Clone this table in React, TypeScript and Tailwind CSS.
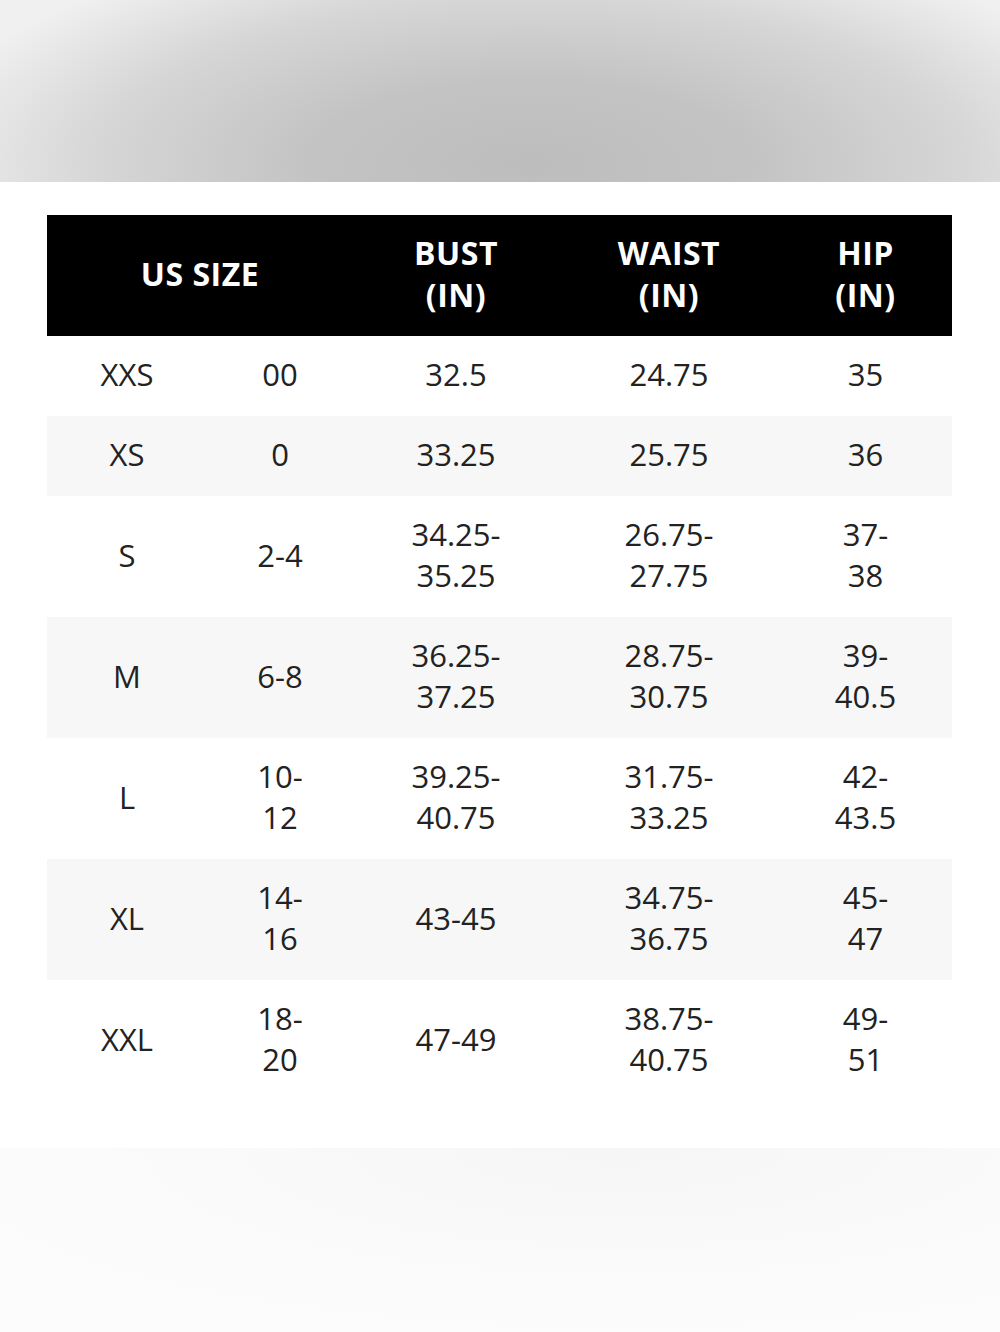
import React from "react";

const rows: { a: string; b: string[]; c: string[]; d: string[]; e: string[] }[] = [
  { a: "XXS", b: ["00"], c: ["32.5"], d: ["24.75"], e: ["35"] },
  { a: "XS", b: ["0"], c: ["33.25"], d: ["25.75"], e: ["36"] },
  { a: "S", b: ["2-4"], c: ["34.25-", "35.25"], d: ["26.75-", "27.75"], e: ["37-", "38"] },
  { a: "M", b: ["6-8"], c: ["36.25-", "37.25"], d: ["28.75-", "30.75"], e: ["39-", "40.5"] },
  { a: "L", b: ["10-", "12"], c: ["39.25-", "40.75"], d: ["31.75-", "33.25"], e: ["42-", "43.5"] },
  { a: "XL", b: ["14-", "16"], c: ["43-45"], d: ["34.75-", "36.75"], e: ["45-", "47"] },
  { a: "XXL", b: ["18-", "20"], c: ["47-49"], d: ["38.75-", "40.75"], e: ["49-", "51"] },
];

function Cell({ lines }: { lines: string[] }) {
  return (
    <div className="flex flex-col items-center justify-center text-center">
      {lines.map((l, i) => (
        <span key={i}>{l}</span>
      ))}
    </div>
  );
}

export default function App() {
  return (
    <div
      className="w-full h-[1332px] flex flex-col bg-white"
      style={{ fontFamily: '"Open Sans", "Noto Sans", sans-serif' }}
    >
      <div className="h-[182px] w-full bg-[radial-gradient(ellipse_62%_130%_at_53%_90%,#bdbdbd_0%,#c3c3c3_35%,#d6d6d6_70%,#f0f0f0_100%)]" />

      <div className="mt-[33px] mx-[47px] w-[905px]">
        <div className="grid grid-cols-[306px_206px_220px_173px] h-[121px] pb-[3px] bg-black text-white font-bold text-[32px] leading-[42px] tracking-[0.5px]">
          <div className="flex items-center justify-center">US SIZE</div>
          <Cell lines={["BUST", "(IN)"]} />
          <Cell lines={["WAIST", "(IN)"]} />
          <Cell lines={["HIP", "(IN)"]} />
        </div>
        {rows.map((r, i) => (
          <div
            key={r.a}
            className={`grid grid-cols-[160px_146px_206px_220px_173px] pt-[18px] pb-[21px] text-[31px] leading-[41px] text-[#222222] ${
              i % 2 === 1 ? "bg-[#f7f7f7]" : "bg-white"
            }`}
          >
            <Cell lines={[r.a]} />
            <Cell lines={r.b} />
            <Cell lines={r.c} />
            <Cell lines={r.d} />
            <Cell lines={r.e} />
          </div>
        ))}
      </div>

      <div className="flex-1" />
      <div className="h-[184px] w-full bg-[radial-gradient(ellipse_70%_100%_at_62%_0%,#f6f6f6_0%,#f9f9f9_50%,#fcfcfc_100%)]" />
    </div>
  );
}
